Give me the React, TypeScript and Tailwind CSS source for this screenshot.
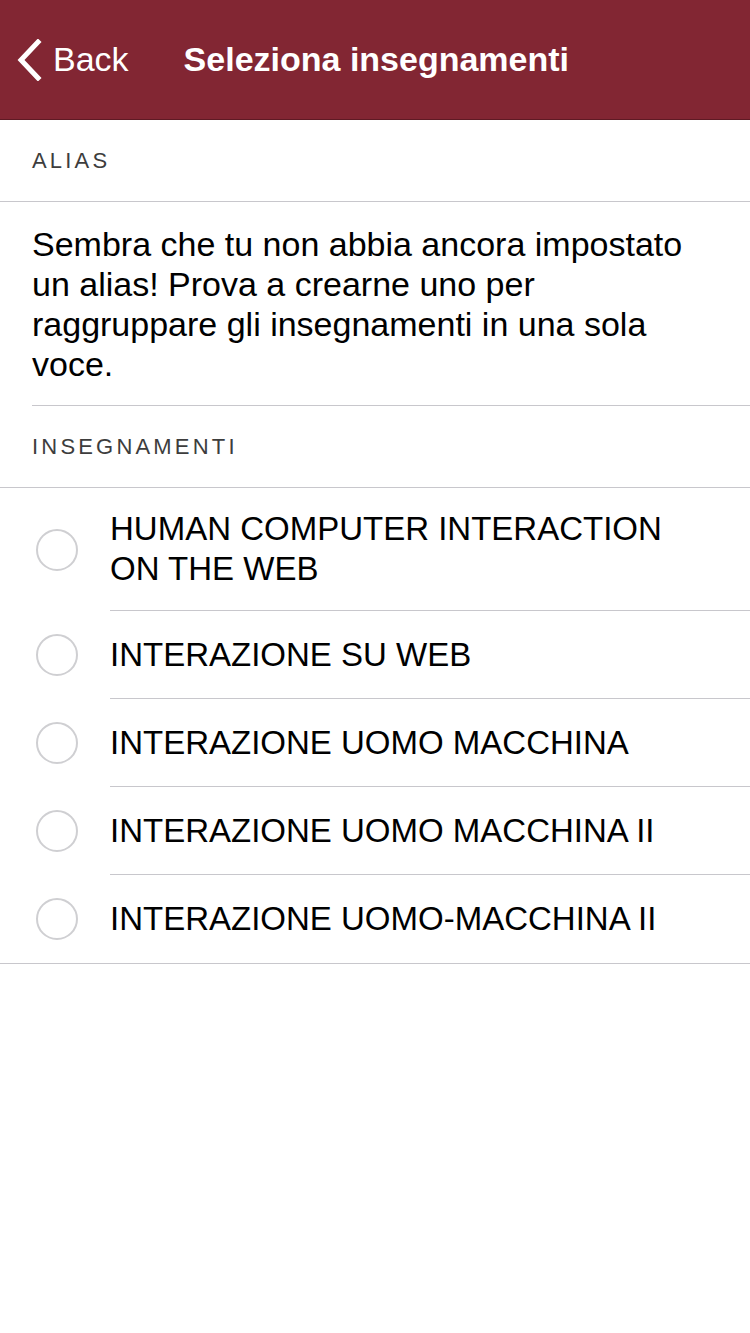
const courses = [
  'HUMAN COMPUTER INTERACTION ON THE WEB',
  'INTERAZIONE SU WEB',
  'INTERAZIONE UOMO MACCHINA',
  'INTERAZIONE UOMO MACCHINA II',
  'INTERAZIONE UOMO-MACCHINA II',
]

function SectionHeader({ label }: { label: string }) {
  return (
    <div className="flex h-[81px] items-center px-8 text-[22px] tracking-[0.145em] text-[#3d3d3d]">
      {label}
    </div>
  )
}

export default function App() {
  return (
    <div className="min-h-[1333px] w-[750px] bg-white font-['Liberation_Sans',sans-serif]">
      {/* Nav bar */}
      <div className="flex h-[120px] items-center border-b border-[#5e1a24] bg-[#822633] text-white">
        <div className="flex items-center pl-4">
          <svg width="26" height="42" viewBox="0 0 26 42" fill="none">
            <path d="M22 3 L5 21 L22 39" stroke="white" strokeWidth="5" strokeLinecap="square" />
          </svg>
          <span className="ml-[11px] text-[34px]">Back</span>
        </div>
        <span className="ml-[55px] text-[34px] font-bold">Seleziona insegnamenti</span>
      </div>

      <SectionHeader label="ALIAS" />
      <div className="border-t border-[#c8c7cc]">
        <div className="ml-8 border-b border-[#c8c7cc] pr-8 pt-[22px] pb-[21px] text-[34px] leading-[40px] text-black">
          Sembra che tu non abbia ancora impostato un alias! Prova a crearne uno per raggruppare gli insegnamenti in una sola voce.
        </div>
      </div>

      <SectionHeader label="INSEGNAMENTI" />
      <div className="border-y border-[#c8c7cc]">
        {courses.map((c, i) => (
          <div key={c} className="flex items-center">
            <div className="flex w-[110px] shrink-0 justify-start pl-9">
              <div className="h-[42px] w-[42px] rounded-full border-2 border-[#cfcfd2]" />
            </div>
            <div
              className={`flex min-h-[88px] flex-1 items-center py-[21px] pr-16 text-[33px] leading-[40px] text-black ${
                i < courses.length - 1 ? 'border-b border-[#c8c7cc]' : ''
              }`}
            >
              {c}
            </div>
          </div>
        ))}
      </div>
    </div>
  )
}
